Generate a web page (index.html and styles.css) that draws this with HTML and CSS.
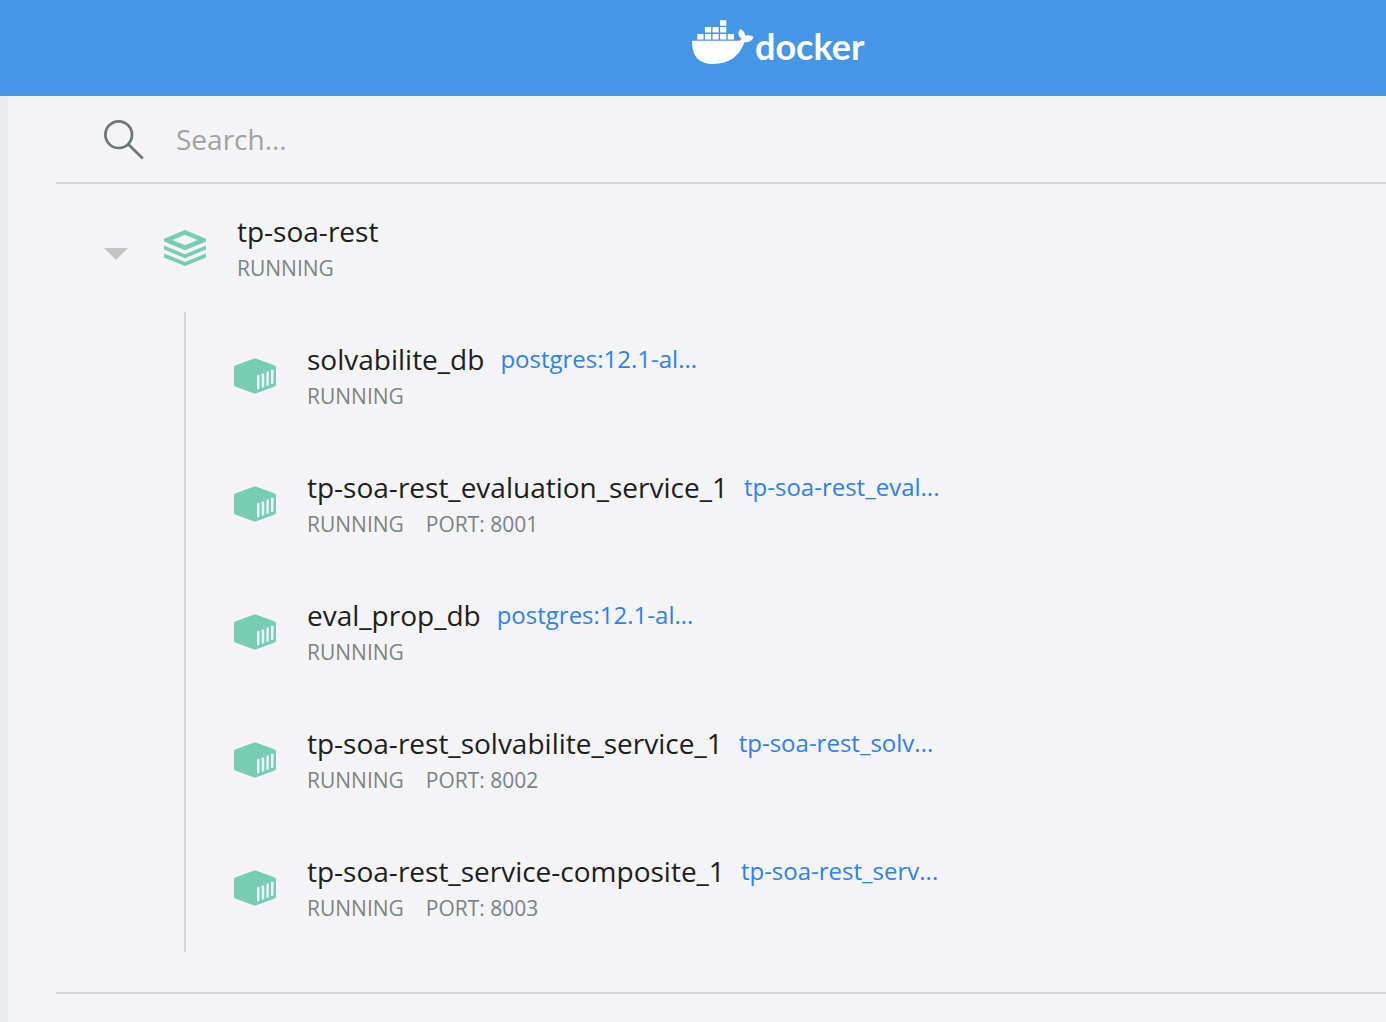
FILE: index.html
```html
<!DOCTYPE html>
<html lang="en">
<head>
<meta charset="utf-8">
<meta name="viewport" content="width=device-width, initial-scale=1">
<title>Docker Dashboard</title>
<link rel="stylesheet" href="styles.css">
</head>
<body>
<svg class="sprite" aria-hidden="true">
  <symbol id="container" viewBox="0 0 42 36">
    <path fill="#77cdb2" d="M19.600.7Q21 .1 22.400.7L40.800 7.600Q42 8.100 42 9.400V26.600Q42 27.900 40.800 28.400L22.400 35.300Q21 35.900 19.600 35.300L1.200 28.400Q0 27.900 0 26.600V9.400Q0 8.100 1.200 7.600Z"/>
    <path fill="#f4f4f6" d="M23 17.600l2.500-.8v14l-2.500.8zM27.800 15.800l2.400-.7v13.800l-2.400.8zM32.400 14l2.400-.8v14l-2.400.8zM37 12.200l2.500-.8v14l-2.500.8z"/>
  </symbol>
</svg>
<header class="topbar">
  <a class="brand" href="#" aria-label="Docker">
    <svg class="whale" viewBox="1 0 62 44" aria-hidden="true">
      <path fill="#fff" d="M0 21.500Q0 20.800.8 20.800H45.500C48 20.800 49.300 20 49.300 18.500C45.700 15 45.700 11.500 48.500 9C51.500 11 53 13 53.200 15.800C56.500 14.800 59.500 15.500 61.500 17.200C60 21 56.500 22.700 52.500 22.300C47 36.500 37.500 44 21 44C7 44 0 36.500 0 21.500Z"/>
      <path fill="#fff" d="M5.300 14h6.200v5.600H5.300zM12.900 14h6.200v5.600h-6.200zM20.500 14h6.200v5.600h-6.200zM28.100 14h6.200v5.600h-6.200zM35.700 14h6.200v5.600h-6.200zM12.900 7h6.200v5.600h-6.200zM20.500 7h6.200v5.600h-6.200zM28.100 7h6.200v5.600h-6.200zM28.100 .2h6.200v5.500h-6.200z"/>
    </svg>
    <span class="wordmark">docker</span>
  </a>
</header>
<main class="panel">
  <label class="search">
    <svg class="search-icon" viewBox="0 -1 40 40" fill="none" stroke="#6c777b" stroke-width="2.700" aria-hidden="true">
      <circle cx="14.700" cy="14.700" r="13.300"/>
      <path d="M24.500 24.500L38.800 38.500"/>
    </svg>
    <input class="search-input" type="text" placeholder="Search..." aria-label="Search">
  </label>
  <section class="group">
    <div class="row group-row">
      <button class="toggle" type="button" aria-label="Collapse tp-soa-rest" aria-expanded="true">
        <svg viewBox="0 0 24 24" width="24" height="24" aria-hidden="true"><path fill="#c4c4c4" d="M0 12h24L12 24z"/></svg>
      </button>
      <svg class="icon stack-icon" viewBox="0 0 42 36" aria-hidden="true">
        <path fill="#77cdb2" fill-rule="evenodd" d="M21 0L42 8.700V11.500L21 20.300L0 11.500V8.700ZM21 4.700L8.500 10L21 15.300L33.500 10Z"/>
        <path fill="#77cdb2" d="M0 15.600L21 24.200L42 15.600V19.600L21 28.200L0 19.600ZM0 23.400L21 32L42 23.400V27.400L21 36L0 27.400Z"/>
      </svg>
      <div class="info">
        <div class="title"><span class="name">tp-soa-rest</span></div>
        <div class="meta"><span>RUNNING</span></div>
      </div>
    </div>
    <ul class="children">
      <li class="row">
        <svg class="icon" aria-hidden="true"><use href="#container"/></svg>
        <div class="info">
          <div class="title"><span class="name">solvabilite_db</span><a class="image" href="#">postgres:12.1-al...</a></div>
          <div class="meta"><span>RUNNING</span></div>
        </div>
      </li>
      <li class="row">
        <svg class="icon" aria-hidden="true"><use href="#container"/></svg>
        <div class="info">
          <div class="title"><span class="name">tp-soa-rest_evaluation_service_1</span><a class="image" href="#">tp-soa-rest_eval...</a></div>
          <div class="meta"><span>RUNNING</span><span>PORT: 8001</span></div>
        </div>
      </li>
      <li class="row">
        <svg class="icon" aria-hidden="true"><use href="#container"/></svg>
        <div class="info">
          <div class="title"><span class="name">eval_prop_db</span><a class="image" href="#">postgres:12.1-al...</a></div>
          <div class="meta"><span>RUNNING</span></div>
        </div>
      </li>
      <li class="row">
        <svg class="icon" aria-hidden="true"><use href="#container"/></svg>
        <div class="info">
          <div class="title"><span class="name">tp-soa-rest_solvabilite_service_1</span><a class="image" href="#">tp-soa-rest_solv...</a></div>
          <div class="meta"><span>RUNNING</span><span>PORT: 8002</span></div>
        </div>
      </li>
      <li class="row">
        <svg class="icon" aria-hidden="true"><use href="#container"/></svg>
        <div class="info">
          <div class="title"><span class="name">tp-soa-rest_service-composite_1</span><a class="image" href="#">tp-soa-rest_serv...</a></div>
          <div class="meta"><span>RUNNING</span><span>PORT: 8003</span></div>
        </div>
      </li>
    </ul>
  </section>
</main>
</body>
</html>
```
FILE: styles.css
```css
* {
  box-sizing: border-box;
}

body {
  display: flex;
  flex-direction: column;
  min-height: 100vh;
  margin: 0;
  background: #f4f4f6;
  color: #1c1e20;
  font-family: "Open Sans", "Noto Sans", sans-serif;
}

.sprite {
  display: none;
}

.topbar {
  height: 96px;
  padding: 20px 0 0 50%;
  background: #4696e8;
}

.brand {
  display: flex;
  align-items: flex-start;
  color: #fff;
  text-decoration: none;
}

.whale {
  flex: none;
  width: 62px;
  height: 44px;
  overflow: visible;
}

.wordmark {
  font: 700 36px/52px Lato, sans-serif;
}

.panel {
  flex: 1;
  padding-left: 48px;
  border-left: 8px solid #e9eaee;
}

.search {
  display: flex;
  align-items: center;
  gap: 32px;
  height: 88px;
  padding-left: 48px;
  border-bottom: 2px solid #d3d4d7;
}

.search-icon {
  flex: none;
  width: 40px;
  height: 40px;
  overflow: visible;
}

.search-input {
  flex: 1;
  min-width: 0;
  padding: 0;
  border: 0;
  outline: 0;
  background: none;
  color: #1c1e20;
  font: 28px/40px "Open Sans", "Noto Sans", sans-serif;
}

.search-input::placeholder {
  color: #a0a1a3;
  opacity: 1;
}

.group {
  padding-bottom: 40px;
  border-bottom: 2px solid #d3d4d7;
}

.row {
  display: flex;
  align-items: center;
  gap: 31px;
  padding: 27px 0;
}

.group-row {
  padding-left: 48px;
}

.toggle {
  display: flex;
  margin-right: 5px;
  padding: 0;
  border: 0;
  background: none;
}

.icon {
  flex: none;
  width: 42px;
  height: 36px;
}

.children {
  margin: 0 0 0 128px;
  padding: 0 0 0 48px;
  border-left: 2px solid #d3d4d7;
  list-style: none;
}

.title {
  display: flex;
  align-items: center;
  gap: 16px;
  font-size: 28px;
  line-height: 40px;
}

.image {
  color: #2d80f7;
  font-size: 24px;
  text-decoration: none;
}

.meta {
  display: flex;
  gap: 22px;
  color: #7a8386;
  font-size: 21px;
  line-height: 34px;
}
```
